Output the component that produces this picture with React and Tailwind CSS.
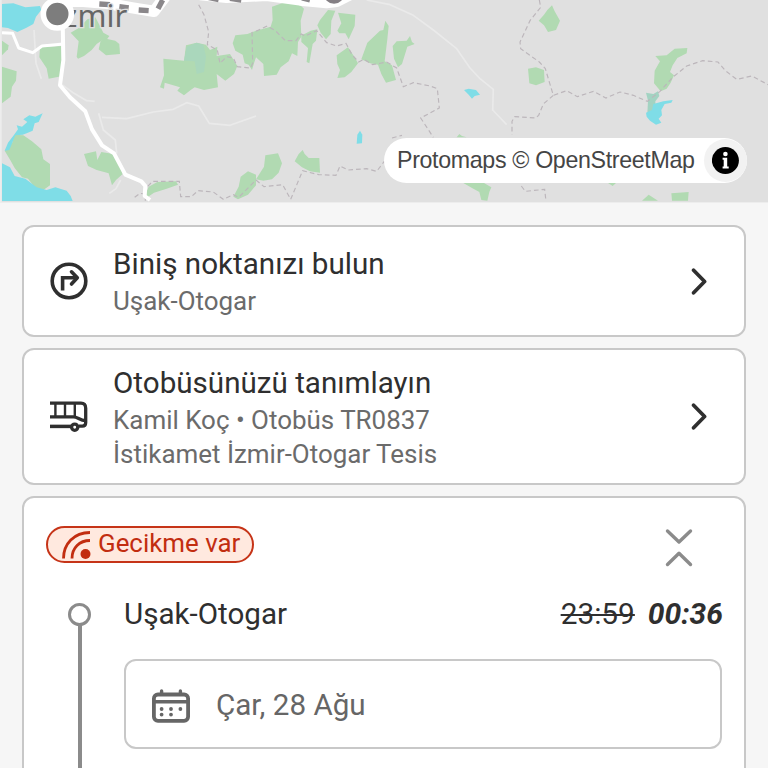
const forests = [
  'M212 98L240 82L262 58L286 52L300 78L310 98L328 108L318 122L304 122L290 132L275 150L252 168L234 176L230 170L236 124Z',
  'M302 122L318 116L346 122L358 132L360 162L318 166L296 148Z',
  'M120 142L184 138L188 228L146 236L140 205L118 172Z',
  'M6 122L26 136L24 148L6 166Z',
  'M6 200L50 214L48 242L36 260L32 290L6 310Z',
  'M44 404L70 406L96 424L124 448L130 478L150 492L150 556L130 570L108 566L84 536L66 532L44 504L32 482L14 452L36 430Z',
  'M252 462L288 454L292 480L304 456L340 462L354 478L368 522L348 540L336 556L326 520L290 510L264 498Z',
  'M436 584L446 560L472 546L528 544L534 554L500 566L462 578L442 592Z',
  'M700 590L716 560L722 530L744 514L768 524L768 556L744 584L714 598Z',
  'M490 176L552 182L558 136L590 128L618 134L630 150L652 140L650 168L690 162L712 198L702 222L676 242L650 222L654 262L612 270L584 262L572 270L552 286L532 272L540 262L494 248L492 266L480 262L492 226Z',
  'M698 130L706 106L742 102L768 92L812 80L818 60L816 20L850 8L870 0L886 2L912 26L902 62L904 110L894 126L892 168L876 160L866 184L842 202L830 224L792 228L790 192L768 172L762 190L756 210L746 194L734 190L728 164L706 152Z',
  'M904 106L918 100L932 92L952 88L948 122L938 132L928 190L920 186L924 144L904 126Z',
  'M960 60L984 30L1006 32L994 62L992 102L978 118L962 98L952 76Z',
  'M1014 38L1066 44L1064 78L1046 118L1036 100L1018 100L1012 92L1024 70Z',
  'M1010 166L1044 142L1064 172L1074 190L1054 216L1034 232L1012 234L1020 210L1012 192Z',
  'M1084 178L1102 128L1140 92L1150 90L1156 62L1166 78L1162 118L1154 184L1176 196L1188 240L1158 248L1144 222L1134 194L1110 190Z',
  'M1178 138L1190 124L1220 122L1230 108L1236 126L1244 132L1222 140L1206 192L1194 202L1182 176Z',
  'M768 538L792 500L796 466L834 460L846 490L836 518L816 538L790 542Z',
  'M884 484L896 462L908 450L914 462L926 474L958 474L960 518L930 514L906 502Z',
  'M1390 549L1452 549L1474 562L1468 576L1462 602L1444 600L1438 576L1416 564Z',
  'M1370 412L1378 402L1386 408L1400 412Z',
  'M1616 62L1632 44L1642 30L1656 16L1664 34L1680 62L1668 90L1644 96L1632 76Z',
  'M1584 206L1608 202L1632 210L1634 246L1608 256L1588 250Z',
  'M1966 168L2000 166L2024 146L2062 144L2060 160L2032 174L2018 196L2010 216L2022 226L2012 248L2000 266L1982 274L1962 250L1964 212L1980 184Z',
  'M1824 549L1848 549L1838 558Z',
  'M1926 602L1946 584L1974 602Z',
  'M2014 580L2066 576L2064 602L2016 602Z',
];

const waters = [
  'M6 12L40 10L76 22L120 18L124 30L108 50L100 72L78 84L52 96L24 84L6 82Z',
  'M6 490L30 502L44 528L76 536L110 562L140 570L166 562L200 572L212 588L218 603L6 603Z',
  'M128 340L116 366L104 370L98 392L80 400L68 404L46 406L28 450L14 452L24 428L44 402L54 388L50 376L66 380L82 366L70 358L88 346L106 350Z',
  'M1080 392L1087 404L1086 430L1070 431L1072 404Z',
  'M1392 270L1406 266L1428 270L1440 284L1424 288L1416 296L1406 284Z',
  'M1960 312L1990 304L2018 300L2014 308L1994 312L1984 330L1986 346L1976 356L1984 368L1968 374L1950 362L1940 350L1938 338L1956 330Z',
];

const borders = [
  'M596 14L612 44L626 96L622 134L652 150L660 190L680 170L700 174L712 200L752 204L758 190L756 94',
  'M768 94L802 78L826 92L856 122L888 122L904 102L916 108L950 92L980 128L1010 138L1038 130L1056 164L1076 186L1092 178L1118 194L1160 186L1190 204L1210 260L1240 248L1290 258L1312 266L1318 324L1262 354L1300 412',
  'M436 602L436 566L458 544L538 544L542 590L574 590L594 572L640 576L670 598L700 584L716 592L768 540L792 560L848 554L872 598L908 512L956 524L1008 526L1020 498L1044 510L1100 506L1130 514L1156 480',
  'M1176 414L1206 406',
  'M404 592L420 580L436 582',
  'M1618 0L1622 22L1590 62L1560 126L1562 146L1618 186L1636 206L1660 286L1700 272L1732 290L1780 274L1818 294L1860 276L1900 286L1942 304L1980 274L2018 232L2060 198L2108 182L2154 186L2176 212L2210 238L2256 228L2304 254',
  'M1660 286L1630 312L1616 346L1606 354L1544 350L1536 364L1536 404',
  'M1564 558L1576 574L1634 568L1638 604',
];

function MapCanvas() {
  return (
    <svg viewBox="0 0 2304 609" className="block h-[203px] w-full bg-[#e0e0e0]">
      <g fill="#b1dab2">
        {forests.map((d) => (
          <path key={d} d={d} />
        ))}
      </g>
      <path d="M552 182L560 140L590 128L610 134L618 170L612 216L590 222L584 184Z" fill="#aad7bc" />
      <path d="M1938 278L1960 282L1974 274L1978 288L1966 304L1968 344L1942 340L1944 302Z" fill="#a3d3c2" />
      <g fill="#7fdde7">
        {waters.map((d) => (
          <path key={d} d={d} />
        ))}
      </g>

      {/* minor roads */}
      <g fill="none" stroke="#eaeaea" strokeWidth="5" strokeLinejoin="round">
        <path d="M186 254L222 280L260 302L284 304" />
        <path d="M306 352L380 356L460 336L520 328L560 308L596 318L628 370L690 376L768 348" />
        <path d="M296 340L310 390L346 420L350 460" />
        <path d="M102 90L108 190L124 236" />
        <path d="M1100 0L1170 14L1240 46L1300 90L1370 146L1410 204L1440 236L1480 268L1478 330L1520 374" />
        <path d="M328 580L348 566L362 540" />
      </g>
      <g fill="none" stroke="#bcb6bb" strokeWidth="3.5" strokeDasharray="14 9">
        {borders.map((d) => (
          <path key={d} d={d} />
        ))}
      </g>

      {/* main roads */}
      <g fill="none" stroke="#fff" strokeLinejoin="round">
        <path d="M6 98L38 100L56 144L98 158L126 138L190 132" strokeWidth="9" />
        <path d="M188 60L190 180L180 256L210 292L256 334L276 388L306 436L342 460L376 524L424 544L436 558L434 588L450 600" strokeWidth="12" />
        <path d="M200 4L250 4L320 10L400 24L462 34L500 -16" strokeWidth="34" />
        <path d="M600 -16L680 -8L800 -14L900 0L980 8L1010 4L1050 -16" strokeWidth="34" />
      </g>
      <path d="M298 12L330 14M358 20L386 24M416 30L446 32M474 26L488 0" stroke="#8a878a" strokeWidth="16" />
      <path d="M624 -8L656 -1M690 -5L724 0M906 -6L930 0" stroke="#8a878a" strokeWidth="16" />
      <circle cx="1002" cy="-20" r="31" fill="#858085" />
      <text x="157" y="82" fontFamily="Noto Sans" fontSize="93" fill="#666" stroke="#e0e0e0" strokeWidth="8" paintOrder="stroke">
        İzmir
      </text>
      <circle cx="172" cy="42" r="42" fill="#7d7d7d" stroke="#fff" strokeWidth="17" />
      <path d="M0 0H5V609H0ZM0 606H2304V609H0Z" fill="#ededed" />
    </svg>
  );
}

function Chevron() {
  return (
    <svg width="16" height="27" viewBox="0 0 16 27" fill="none" stroke="#2f2f2f" strokeWidth="3.7" strokeLinecap="round" strokeLinejoin="round">
      <path d="M2.6 2.2L13.6 13.5L2.6 24.8" />
    </svg>
  );
}

function DirectionIcon() {
  return (
    <svg width="38" height="38" viewBox="0 0 38 38" fill="none" stroke="#2f2f2f" strokeWidth="3.6">
      <circle cx="19" cy="19" r="16.8" />
      <path d="M12.6 28.6V15.8H27" />
      <path d="M21.5 9.8L27.3 15.8L21.5 22" strokeLinecap="round" strokeLinejoin="round" />
    </svg>
  );
}

function BusIcon() {
  return (
    <svg width="38" height="32" viewBox="0 0 38 32" fill="none" stroke="#2f2f2f">
      <path d="M0 2.2H31Q35.7 2.2 35.7 7.2V21.6Q35.7 25.2 32.3 25.2H29" strokeWidth="3.3" />
      <path d="M0 15.9H23.5C27.5 15.9 30 19.4 35.5 19.6" strokeWidth="3.3" />
      <path d="M0 25.4H21" strokeWidth="3.5" />
      <path d="M5.4 3V16M15 3V16M24.8 3V16" strokeWidth="2.4" />
      <circle cx="24.7" cy="26.2" r="3.1" fill="#fff" strokeWidth="3.3" />
    </svg>
  );
}

function CalendarIcon() {
  return (
    <svg width="38" height="34" viewBox="0 0 38 34" fill="none" stroke="#666">
      <rect x="1.9" y="5.5" width="34.2" height="26.3" rx="4" strokeWidth="3.8" />
      <path d="M1.9 12.8H36.1" strokeWidth="3.6" />
      <path d="M9.6 5V2M28.4 5V2" strokeWidth="3.4" strokeLinecap="round" />
      <path d="M9.6 20h.01M19 20h.01M28.4 20h.01M9.6 25.6h.01M19 25.6h.01" strokeWidth="3.8" strokeLinecap="round" />
    </svg>
  );
}

function ActionCard({ icon, title, lines, className }) {
  return (
    <div className={`flex items-center rounded-xl border-2 border-[#c8c8c8] bg-white pr-[37px] pl-[26px] ${className}`}>
      <div className="w-[63px] shrink-0">{icon}</div>
      <div className="flex-1 whitespace-nowrap">
        <div className="text-[29.6px] leading-[40px] text-[#2f2f2f]">{title}</div>
        {lines.map((line) => (
          <div key={line} className="text-[25.95px] leading-[34px] text-[#6b6b6b]">
            {line}
          </div>
        ))}
      </div>
      <Chevron />
    </div>
  );
}

export default function App() {
  return (
    <div className="h-[768px] w-[768px] overflow-hidden bg-[#f6f6f6] font-['Roboto',sans-serif]">
      <div className="relative h-[203px]">
        <MapCanvas />
        <div className="absolute top-[138px] right-[21px] flex h-[45px] items-center rounded-full bg-white pl-[13px] font-['Liberation_Sans',sans-serif] text-[23.2px] text-[#454545]">
          <span className="w-[307px] tracking-[-0.33px] whitespace-nowrap">Protomaps © OpenStreetMap</span>
          <span className="flex size-[43px] items-center justify-center rounded-full bg-[#f2f2f2]">
            <svg width="28" height="28" viewBox="0 0 28 28">
              <circle cx="13.4" cy="13.5" r="13.5" fill="#000" />
              <circle cx="13.4" cy="7" r="2.3" fill="#fff" />
              <path d="M10.6 10.7H15.2V19.5H16.7V21.5H10.6V19.5H11.7V12.7H10.6Z" fill="#fff" />
            </svg>
          </span>
        </div>
      </div>

      <div className="flex flex-col gap-[11px] px-[22px] pt-[22px]">
        <ActionCard
          className="h-[112px]"
          icon={<DirectionIcon />}
          title="Biniş noktanızı bulun"
          lines={['Uşak-Otogar']}
        />
        <ActionCard
          className="h-[137px]"
          icon={<BusIcon />}
          title="Otobüsünüzü tanımlayın"
          lines={['Kamil Koç • Otobüs TR0837', 'İstikamet İzmir-Otogar Tesis']}
        />

        <div className="h-[300px] rounded-xl border-2 border-[#c8c8c8] bg-white px-[22px] pt-7">
          <div className="flex items-start justify-between">
            <div className="flex h-[37px] w-[208px] items-center rounded-full border-2 border-[#c63418] bg-[#ffe9df] pl-[14px] text-[25.9px] text-[#c22d10]">
              <svg width="30" height="30" viewBox="0 0 30 30" fill="none" stroke="#c22d10" strokeWidth="2.8">
                <path d="M1.5 28.5C1.5 14 12 2.5 28 2.5" />
                <path d="M10 28.5C10 18 17.5 10.5 28 10.5" />
                <circle cx="23.5" cy="24" r="5" fill="#c22d10" stroke="none" />
              </svg>
              <span className="-mt-[3px] ml-[6px] leading-[34px] whitespace-nowrap">Gecikme var</span>
            </div>
            <svg className="mt-[2px] mr-[29px]" width="28" height="40" viewBox="0 0 28 40" fill="none" stroke="#8b8b8b" strokeWidth="3.4" strokeLinecap="round" strokeLinejoin="round">
              <path d="M2.5 3L14 14L25.5 3M2.5 36.5L14 25.3L25.5 36.5" />
            </svg>
          </div>

          <div className="mt-[26px] flex">
            {/* timeline */}
            <div className="flex w-[78px] flex-col items-start pt-[9px] pl-[22px]">
              <div className="size-[23px] rounded-full border-[3.5px] border-[#8b8b8b]" />
              <div className="-mt-px ml-[9.5px] h-[200px] w-1 bg-[#8b8b8b]" />
            </div>
            <div className="flex-1">
              <div className="flex text-[29.6px] leading-10 text-[#2f2f2f]">
                <span className="flex-1">Uşak-Otogar</span>
                <span className="text-[29.8px] line-through decoration-2">23:59</span>
                <span className="mr-[-1px] ml-[13px] text-[30px] font-bold italic">00:36</span>
              </div>
              <div className="mt-[25px] flex h-[90px] items-center rounded-xl border-2 border-[#c8c8c8] pt-[3px] pl-[26px] text-[29.6px] text-[#666]">
                <CalendarIcon />
                <span className="ml-[26px]">Çar, 28 Ağu</span>
              </div>
            </div>
          </div>
        </div>
      </div>
    </div>
  );
}
